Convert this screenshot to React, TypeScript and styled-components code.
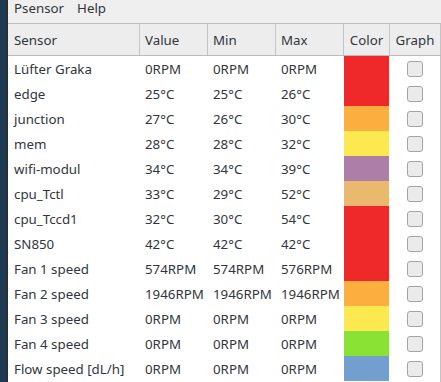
import React from 'react';
import styled, { createGlobalStyle } from 'styled-components';

const GlobalStyle = createGlobalStyle`
  html, body {
    margin: 0;
    padding: 0;
    background: #2b4b63;
  }
  body {
    font-family: "Noto Sans", "Open Sans", sans-serif;
    font-size: 13.3px;
    color: #31363b;
  }
`;

const Desktop = styled.div`
  display: flex;
  height: 382px;
  overflow: hidden;
  padding-left: 6px;
  background: linear-gradient(90deg, #1d3a52 0%, #3c6782 70%, #2c5068 100%);
`;

const Window = styled.div`
  flex: 1;
  display: flex;
  flex-direction: column;
  min-width: 0;
  border-left: 2px solid #2a2d31;
  background: #efefef;
  overflow: hidden;
`;

const MenuBar = styled.div`
  display: flex;
  height: 23px;
  flex-shrink: 0;
  line-height: 16px;
  background: #efefef;
`;

const MenuItem = styled.div`
  padding: 0 6px;
  margin-right: 1px;
`;

const COLUMNS = '131px 68px 68px 68px 46px 52px';

const HeaderRow = styled.div`
  display: grid;
  grid-template-columns: ${COLUMNS};
  height: 31px;
  flex-shrink: 0;
  border-top: 1px solid #bcbcbc;
  border-bottom: 1px solid #bcbcbc;
  background: #ededed;
`;

const HeaderCell = styled.div<{ $first?: boolean; $last?: boolean; $center?: boolean }>`
  display: flex;
  align-items: center;
  justify-content: ${p => (p.$center ? 'center' : 'flex-start')};
  padding-left: ${p => (p.$center ? 0 : p.$first ? 6 : 5)}px;
  border-left: ${p => (p.$first ? 'none' : '1px solid #c4c4c4')};
  border-right: ${p => (p.$last ? '1px solid #c4c4c4' : 'none')};
`;

const Body = styled.div`
  flex: 1;
  background: #ffffff;
  border-right: 1px solid #c4c4c4;
  overflow: hidden;
`;

const Row = styled.div`
  display: grid;
  grid-template-columns: ${COLUMNS};
  height: 25px;
`;

const Cell = styled.div`
  display: flex;
  align-items: center;
  padding-left: 6px;
  white-space: nowrap;
`;

const Swatch = styled.div<{ $color: string }>`
  margin-left: 1px;
  background: ${p => p.$color};
`;

const CheckCell = styled.div`
  display: flex;
  align-items: center;
  justify-content: center;
  padding-right: 1px;
`;

const CheckBox = styled.div`
  width: 14px;
  height: 14px;
  border: 1px solid #a3a3a3;
  border-radius: 3px;
  background: #ebebeb;
`;

const RED = '#ef2929';
const ORANGE = '#fcaf3e';
const YELLOW = '#fce94f';
const PLUM = '#ad7fa8';
const TAN = '#e9b96e';
const GREEN = '#8ae234';
const BLUE = '#729fcf';

type Sensor = { name: string; value: string; min: string; max: string; color: string };

const sensors: Sensor[] = [
  { name: 'Lüfter Graka', value: '0RPM', min: '0RPM', max: '0RPM', color: RED },
  { name: 'edge', value: '25°C', min: '25°C', max: '26°C', color: RED },
  { name: 'junction', value: '27°C', min: '26°C', max: '30°C', color: ORANGE },
  { name: 'mem', value: '28°C', min: '28°C', max: '32°C', color: YELLOW },
  { name: 'wifi-modul', value: '34°C', min: '34°C', max: '39°C', color: PLUM },
  { name: 'cpu_Tctl', value: '33°C', min: '29°C', max: '52°C', color: TAN },
  { name: 'cpu_Tccd1', value: '32°C', min: '30°C', max: '54°C', color: RED },
  { name: 'SN850', value: '42°C', min: '42°C', max: '42°C', color: RED },
  { name: 'Fan 1 speed', value: '574RPM', min: '574RPM', max: '576RPM', color: RED },
  { name: 'Fan 2 speed', value: '1946RPM', min: '1946RPM', max: '1946RPM', color: ORANGE },
  { name: 'Fan 3 speed', value: '0RPM', min: '0RPM', max: '0RPM', color: YELLOW },
  { name: 'Fan 4 speed', value: '0RPM', min: '0RPM', max: '0RPM', color: GREEN },
  { name: 'Flow speed [dL/h]', value: '0RPM', min: '0RPM', max: '0RPM', color: BLUE },
];

export default function App() {
  return (
    <>
      <GlobalStyle />
      <Desktop>
        <Window>
          <MenuBar>
            <MenuItem>Psensor</MenuItem>
            <MenuItem>Help</MenuItem>
          </MenuBar>
          <HeaderRow>
            <HeaderCell $first>Sensor</HeaderCell>
            <HeaderCell>Value</HeaderCell>
            <HeaderCell>Min</HeaderCell>
            <HeaderCell>Max</HeaderCell>
            <HeaderCell $center>Color</HeaderCell>
            <HeaderCell $center $last>Graph</HeaderCell>
          </HeaderRow>
          <Body>
            {sensors.map(s => (
              <Row key={s.name}>
                <Cell>{s.name}</Cell>
                <Cell>{s.value}</Cell>
                <Cell>{s.min}</Cell>
                <Cell>{s.max}</Cell>
                <Swatch $color={s.color} />
                <CheckCell>
                  <CheckBox />
                </CheckCell>
              </Row>
            ))}
          </Body>
        </Window>
      </Desktop>
    </>
  );
}
